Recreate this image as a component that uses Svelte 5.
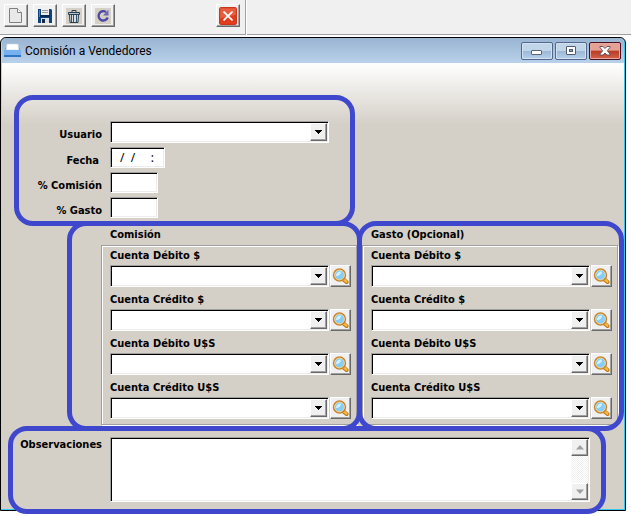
<script>
  const accounts = ['Cuenta Débito $', 'Cuenta Crédito $', 'Cuenta Débito U$S', 'Cuenta Crédito U$S'];
  const groups = [
    { id: 'comision', title: 'Comisión' },
    { id: 'gasto', title: 'Gasto (Opcional)' }
  ];
  const emptyDate = '/\u00a0\u00a0/\u00a0\u00a0\u00a0\u00a0\u00a0:';
</script>

{#snippet combo(id)}
  <div class="combo">
    <select {id}><option></option></select>
    <span class="arrow raised"><svg width="7" height="4" viewBox="0 0 7 4" shape-rendering="crispEdges"><path d="M0 0h7v1H6v1H5v1H4v1H3V3H2V2H1V1H0z" fill="#000" /></svg></span>
  </div>
{/snippet}

<div class="page">
  <header class="toolbar">
    <div class="tools">
      <button class="tool raised" aria-label="Nuevo">
        <svg width="16" height="18" viewBox="0 0 16 18"><path d="M1.500 1.500h8l4 4v10h-12z" fill="#e9e9e9" stroke="#808080" /><path d="M9.500 1.500v4h4" fill="#fff" stroke="#808080" /></svg>
      </button>
      <button class="tool raised" aria-label="Guardar">
        <svg width="16" height="16" viewBox="0 0 16 16"><path d="M1 1h13l1 1v13H1z" fill="#0d427c" /><path d="M2 2h1v7H2z" fill="#4f83b5" /><path d="M4 1h8v6H4z" fill="#eee" /><path d="M5 2.500h6M5 4.500h6" stroke="#999" /><path d="M3 7h10v2H3z" fill="#082a50" /><path d="M4 10h8v5H4z" fill="#d7e1e7" /><path d="M5 11h3v4H5z" fill="#172b43" /></svg>
      </button>
      <button class="tool raised" aria-label="Eliminar">
        <svg width="16" height="16" viewBox="0 0 16 16"><path d="M0 0h16v16H0z" fill="#d4d0c5" /><path d="M6 4V2.500h4V4" fill="none" stroke="#263d52" /><path d="M2.500 4.500h11v2h-11z" fill="#b4c0c8" stroke="#263d52" /><path d="M3.500 6.500h9l-.5 8H4z" fill="#d5dde0" stroke="#263d52" /><path d="M5.500 7v7M7.500 7v7M10.500 7v7" stroke="#38546a" /></svg>
      </button>
      <button class="tool raised" aria-label="Actualizar">
        <svg width="16" height="16" viewBox="0 0 16 16"><path d="M0 0h16v16H0z" fill="#d4d0c5" /><path d="M11 4A4.700 4.700 0 1 0 12.700 9.500" fill="none" stroke="#4d48a5" stroke-width="2.400" /><path d="M8 7.500h5.500V1.700z" fill="#6965bb" /></svg>
      </button>
      <button class="tool raised exit" aria-label="Salir">
        <svg width="18" height="18" viewBox="0 0 16 16"><rect x=".5" y=".5" width="15" height="15" rx="1.500" fill="#e23c1a" stroke="#c9381e" /><path d="M1 1h14v6L1 10z" fill="#ef775c" opacity=".55" /><path d="m4.500 4.500 7 7M11.500 4.500l-7 7" stroke="#fff" stroke-width="1.600" stroke-linecap="round" /></svg>
      </button>
    </div>
    <div class="rest"></div>
  </header>

  <main class="window">
    <div class="titlebar">
      <svg class="app" width="17" height="17" viewBox="0 0 17 17"><path d="m1 6 3-1v4h10V5l2 1v3H1z" fill="#5aa1e8" /><path d="M3 2h11l1 6H2z" fill="#fff" stroke="#c7d9e8" stroke-width=".6" /><path d="M0 8h17v5H0z" fill="#76b0ee" /><path d="M0 13h17v2H0z" fill="#2e74c7" /></svg>
      <h1>Comisión a Vendedores</h1>
      <button class="cap" aria-label="Minimizar"><svg width="12" height="12" viewBox="0 0 12 12"><rect x=".5" y="5.500" width="10" height="4" rx=".5" fill="#fff" stroke="#5b6473" /></svg></button>
      <button class="cap" aria-label="Maximizar"><svg width="12" height="12" viewBox="0 0 12 12"><rect x="1.500" y="1.500" width="9" height="8" rx=".5" fill="#fff" stroke="#525b6b" /><rect x="4.500" y="4.500" width="3" height="2" fill="#7fa6cc" stroke="#525b6b" /></svg></button>
      <button class="cap close" aria-label="Cerrar"><svg width="12" height="12" viewBox="0 0 12 12"><path d="M1 1.500h3l2 2 2-2h3v1L8.300 5.700 11 9v1H8L6 8l-2 2H1V9l2.700-3.300L1 2.500z" fill="#fff" stroke="#5b4a55" stroke-width=".9" /></svg></button>
    </div>

    <form class="body">
      <section class="general">
        <label for="usuario">Usuario</label>
        {@render combo('usuario')}
        <label for="fecha" class="date-label">Fecha</label>
        <input id="fecha" class="date" type="text" value={emptyDate} />
        <label for="pcomision">% Comisión</label>
        <input id="pcomision" type="text" />
        <label for="pgasto">% Gasto</label>
        <input id="pgasto" type="text" />
      </section>

      <div class="groups">
        {#each groups as group}
          <section class="group {group.id}">
            <h2>{group.title}</h2>
            <div class="frame">
              {#each accounts as account, i}
                <label for="{group.id}-{i}">{account}</label>
                <div class="row">
                  {@render combo(`${group.id}-${i}`)}
                  <button type="button" class="search raised" aria-label="Buscar {account}">
                    <svg width="17" height="17" viewBox="0 0 17 17"><path d="m11.500 11.500 3 2.500" stroke="#b87412" stroke-width="4" stroke-linecap="round" /><path d="m12 11.500 2.400 2.200" stroke="#fbb83d" stroke-width="2.400" stroke-linecap="round" /><circle cx="7.500" cy="7" r="5.800" fill="#87cdf8" stroke="#c9852c" stroke-width="1.800" /><circle cx="7.500" cy="7" r="4.900" fill="none" stroke="#f7dfa8" stroke-width=".8" /><path d="M4 8c0-3 2-4.500 5-4.500C9 6 7 8 4 8z" fill="#d4f0ff" /></svg>
                  </button>
                </div>
              {/each}
            </div>
          </section>
        {/each}
      </div>

      <section class="notes">
        <label for="obs">Observaciones</label>
        <div class="memo">
          <textarea id="obs"></textarea>
          <div class="scroll">
            <span class="step raised"><svg width="8" height="5" viewBox="0 0 8 5"><path d="M4 0 8 4.500H0z" fill="#a0a0a0" /></svg></span>
            <span class="step raised"><svg width="8" height="5" viewBox="0 0 8 5"><path d="M4 5 8 .5H0z" fill="#a0a0a0" /></svg></span>
          </div>
        </div>
      </section>
    </form>
  </main>
</div>

<style>
  :global(body) { background: #fff; }
  .page { font: bold 11px/16px "DejaVu Sans Condensed", "DejaVu Sans", sans-serif; color: #000; padding-bottom: 5px; }
  .page * { box-sizing: border-box; }
  h1, h2 { margin: 0; font-size: 11px; line-height: 16px; }
  svg { display: block; flex: none; }
  button { padding: 0; display: flex; align-items: center; justify-content: center; }
  .raised {
    background: #f0f0f0;
    border: 1px solid;
    border-color: #fff #696969 #696969 #fff;
    box-shadow: inset -1px -1px #a0a0a0;
  }

  .toolbar { display: flex; gap: 1px; height: 35px; margin-bottom: 2px; }
  .tools { display: flex; gap: 5px; width: 246px; padding: 4px 5px 4px 4px; background: #f0f0f0; border: solid #a0a0a0; border-width: 0 1px 1px 0; }
  .tool { width: 24px; height: 23px; }
  .exit { margin-left: auto; }
  .rest { flex: 1; background: #f0f0f0; border-bottom: 1px solid #a0a0a0; }

  .window { margin-right: 5px; border: 1px solid #000; border-radius: 6px 6px 0 0; background: #b9d1ea; padding: 0 1px 1px; box-shadow: inset -1px -1px #35c8ee; }
  .titlebar { display: flex; align-items: center; gap: 2px; height: 25px; padding: 0 3px 0 2px; background: linear-gradient(#99b4d1, #b9d1ea); border-radius: 5px 5px 0 0; }
  h1 { flex: 1; padding: 1px 0 0 2px; font: 12px/16px Roboto, "Open Sans", sans-serif; }
  .cap { width: 32px; height: 18px; border: 1px solid #52678b; border-radius: 2px; background: linear-gradient(#c1d5e9 0 48%, #9bb7d4 50%, #b5d0eb); box-shadow: inset 0 0 0 1px #d2e2f2; }
  .close { border-color: #4b1020; background: linear-gradient(#e4a195 0 45%, #b93c24 50%, #d4624a); box-shadow: inset 0 0 0 1px #e5a99f; }

  .body { padding: 58px 6px 7px 0; background: linear-gradient(#fff, #d4cfc7 62px); }
  section { position: relative; }
  section::after { content: ""; position: absolute; border: 5px solid #3f48cc; border-radius: 19px; pointer-events: none; z-index: 1; }

  .general { display: grid; grid-template-columns: 100px 219px; column-gap: 8px; row-gap: 4px; width: fit-content; }
  .general::after { inset: -26px -26px -8px 12px; }
  .general > label, .notes > label { text-align: right; padding-top: 6px; line-height: 15px; }
  .general > .date-label { padding-right: 3px; }

  input, select, textarea {
    display: block; width: 48px; height: 21px; margin: 0; padding: 0 2px; border: 1px solid;
    border-color: #a0a0a0 #fff #fff #a0a0a0; border-radius: 0; background: #fff; outline: none;
    box-shadow: inset 1px 1px #000, inset -1px -1px #ececec; font: 12px/16px "Noto Sans", sans-serif;
  }
  .date { width: 55px; padding: 0 0 0 9px; }
  .combo { position: relative; flex: 1; min-width: 0; }
  select { appearance: none; width: 100%; height: 22px; }
  .arrow { position: absolute; top: 2px; right: 2px; bottom: 2px; width: 17px; display: flex; align-items: center; justify-content: center; pointer-events: none; }

  .groups { display: grid; grid-template-columns: 1fr 1fr; gap: 5px; margin: 9px 0 0 99px; }
  .group h2 { padding-left: 9px; margin-bottom: 2px; }
  .group::after { inset: -6px -6px -6px -5px; }
  .comision::after { left: -34px; right: -5px; }
  .frame { border: 1px solid #a0a0a0; box-shadow: inset 1px 1px #fff, 1px 1px #fff; padding: 2px 5px 5px 8px; }
  .frame label { display: block; line-height: 16px; margin-bottom: 1px; }
  .row { display: flex; gap: 1px; margin-bottom: 5px; }
  .row:last-child { margin-bottom: 0; }
  .search { width: 21px; height: 22px; }

  .notes { display: flex; gap: 8px; margin: 12px 28px 0 0; }
  .notes > label { width: 100px; padding-top: 0; }
  .notes::after { inset: -11px -16px -12px 6px; }
  .memo { position: relative; flex: 1; }
  textarea { width: 100%; height: 65px; padding: 2px 20px 2px 4px; resize: none; overflow: hidden; }
  .scroll { position: absolute; top: 2px; right: 2px; bottom: 2px; width: 17px; display: flex; flex-direction: column; justify-content: space-between; background: repeating-conic-gradient(#fff 0 25%, #f0f0f0 0 50%) 0 0 / 2px 2px; }
  .step { height: 17px; display: flex; align-items: center; justify-content: center; }
</style>
